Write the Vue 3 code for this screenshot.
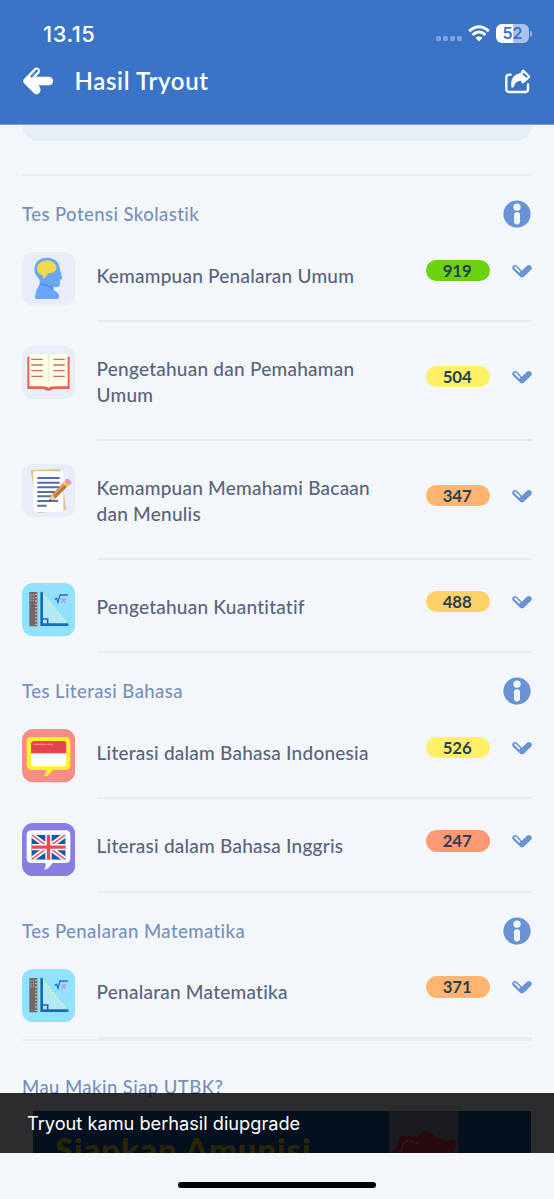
<script setup>
const sections = [
  {
    title: 'Tes Potensi Skolastik',
    rows: [
      { icon: 'head', lines: ['Kemampuan Penalaran Umum'], score: 919, tone: 'green' },
      { icon: 'book', lines: ['Pengetahuan dan Pemahaman', 'Umum'], score: 504, tone: 'yellow' },
      { icon: 'note', lines: ['Kemampuan Memahami Bacaan', 'dan Menulis'], score: 347, tone: 'orange' },
      { icon: 'math', lines: ['Pengetahuan Kuantitatif'], score: 488, tone: 'amber' },
    ],
  },
  {
    title: 'Tes Literasi Bahasa',
    rows: [
      { icon: 'indo', lines: ['Literasi dalam Bahasa Indonesia'], score: 526, tone: 'yellow' },
      { icon: 'uk', lines: ['Literasi dalam Bahasa Inggris'], score: 247, tone: 'red' },
    ],
  },
  {
    title: 'Tes Penalaran Matematika',
    rows: [{ icon: 'math', lines: ['Penalaran Matematika'], score: 371, tone: 'orange' }],
  },
]
</script>

<template>
  <div class="screen">
    <header class="top">
      <div class="status">
        <span class="time">13.15</span>
        <div class="signals">
          <span class="dots"><i></i><i></i><i></i><i></i></span>
          <svg class="wifi" width="22" height="17" viewBox="0 0 22 17">
            <g fill="none" stroke="#fff" stroke-width="2.9">
              <path d="M1.2 6.1Q11 -2.6 20.8 6.1" />
              <path d="M4.6 9.9Q11 4.1 17.4 9.9" />
            </g>
            <path d="M7.4 12.7Q11 9.7 14.6 12.7L11 16.4Z" fill="#fff" />
          </svg>
          <span class="battery">52</span>
          <i class="cap"></i>
        </div>
      </div>
      <div class="bar">
        <svg class="back" width="30" height="28" viewBox="0 0 90 84">
          <path d="M3 36L33 5Q40 -1 47 4Q54 10 49 18L39 29H78Q90 30 90 42Q90 54 78 55H47L51 62Q55 71 49 78Q41 86 33 79L3 49Q-2 42 3 36Z" fill="#fff" />
          <path d="M26 28L42 11" stroke="#3b74c7" stroke-width="7" stroke-linecap="round" />
          <path d="M29 27L40 15" stroke="#fff" stroke-width="1.5" />
        </svg>
        <h1>Hasil Tryout</h1>
        <svg class="share" width="26" height="25" viewBox="0 0 78 75">
          <path d="M17 17H13Q4 17 4 26V61Q4 69 12 69H61Q69 69 69 61V46" fill="none" stroke="#fff" stroke-width="7" stroke-linecap="round" />
          <path d="M19 55Q14 19 47 12Q48 7 51 3Q54 0 58 3L74 20Q78 24 74 27L57 42Q53 45 50 41L48 35Q32 34 26 53Q23 58 19 55Z" fill="#fff" />
          <path d="M56 15L65 23" stroke="#3b74c7" stroke-width="6" stroke-linecap="round" />
        </svg>
      </div>
    </header>

    <main class="content">
      <div class="card-end"></div>
      <div class="rule first"></div>
      <section v-for="s in sections" :key="s.title">
        <div class="head">
          <h2>{{ s.title }}</h2>
          <svg width="28" height="28" viewBox="0 0 28 28">
            <circle cx="14" cy="14" r="13.6" fill="#6a93d5" />
            <circle cx="14" cy="7.2" r="3.6" fill="#f3f7fa" />
            <rect x="11" y="12.2" width="6" height="12.2" rx="2.8" fill="#f3f7fa" />
          </svg>
        </div>
        <div v-for="r in s.rows" :key="r.lines[0]" class="row">
          <svg class="tile" viewBox="0 0 160 160">
            <template v-if="r.icon === 'head'">
              <rect width="160" height="160" rx="34" fill="#e7eef8" />
              <path d="M53 99V83Q37 68 37 51Q40 18 76 17Q111 19 114 53L121 79Q121 83 114 83V98Q113 106 103 105H94V114Q111 121 112 135Q112 141 105 141H43Q38 141 39 135Q43 108 53 99Z" fill="#6ca6f8" />
              <path d="M53 99Q77 101 94 114V107Q77 94 53 95Z" fill="#598fe2" />
              <path d="M46 57Q42 42 54 32Q75 18 94 31Q108 42 101 56Q95 64 80 63Q75 67 67 80Q62 80 61 69Q49 68 46 57Z" fill="#f2d84d" />
            </template>
            <template v-else-if="r.icon === 'book'">
              <rect width="160" height="160" rx="34" fill="#e7eef8" />
              <path d="M16 32H143V129H94Q80 139 65 129H16Z" fill="#e36454" />
              <path d="M22 24H66Q80 24 80 30Q83 24 96 24H137V121H98Q82 121 80 126Q76 121 62 121H22Z" fill="#fffde4" />
              <path d="M80 31V124" stroke="#d8dfca" stroke-width="3" stroke-dasharray="3 2" />
              <path d="M29 40H61M29 57H61M29 74H61M29 91H61M96 40H127M96 57H127M96 74H127M96 91H127" stroke="#c96a68" stroke-width="4" stroke-linecap="round" />
            </template>
            <template v-else-if="r.icon === 'note'">
              <rect width="160" height="160" rx="34" fill="#e7eef8" />
              <path d="M26 18L115 15L133 137L48 148Z" fill="#dfc391" />
              <path d="M34 22H124V135Q124 144 115 144H44Q35 144 35 135Z" fill="#fff" />
              <path d="M46 42H113M46 56H113M46 70H113M46 84H101M46 97H95M46 111H108M46 125H74" stroke="#556ca7" stroke-width="6" />
              <path d="M81 112L88 93L129 52L141 63L99 105Z" fill="#b77a4d" />
              <path d="M81 112L88 93Q97 94 99 105Z" fill="#ffd4a0" />
              <path d="M89 98L130 57" stroke="#ffad3f" stroke-width="4" />
              <path d="M126 56L138 67" stroke="#ffd62f" stroke-width="7" />
              <path d="M136 51L142 56" stroke="#f68bcf" stroke-width="13" stroke-linecap="round" />
              <path d="M80 113L84 105L89 109Z" fill="#282b39" />
            </template>
            <template v-else-if="r.icon === 'math'">
              <rect width="160" height="160" rx="34" fill="#91e2ff" />
              <rect x="22" y="27" width="24" height="103" fill="#72686b" />
              <path d="M42 32V130" stroke="#c9b19b" stroke-width="6" stroke-dasharray="4 6" />
              <path d="M27 34V57M34 34V57" stroke="#d8d5cd" stroke-width="2" stroke-dasharray="5 3" />
              <path d="M60 34V124H136Z" fill="#b3e8f6" />
              <path d="M63 35L134 121" stroke="#d9f4bc" stroke-width="5" stroke-dasharray="7 4" />
              <path d="M59 30V125H136" fill="none" stroke="#196bb0" stroke-width="8" stroke-linecap="round" />
              <path d="M61 108H77V123" fill="none" stroke="#196bb0" stroke-width="5" />
              <path d="M98 49L104 46L108 58L114 36H138" fill="none" stroke="#2475b7" stroke-width="4" />
              <path d="M119 46L131 59M132 46L118 59" stroke="#d982e6" stroke-width="4" />
            </template>
            <template v-else-if="r.icon === 'indo'">
              <rect width="160" height="160" rx="34" fill="#f48e85" />
              <path d="M29 24H131Q145 24 145 39V109Q145 123 131 123H93L77 142H66L73 123H29Q14 123 14 109V39Q14 24 29 24Z" fill="#fff02b" />
              <rect x="27" y="36" width="106" height="76" rx="9" fill="#fff" />
              <path d="M36 36H124Q133 36 133 45V73H27V45Q27 36 36 36Z" fill="#e6434f" />
              <path d="M36 46H73M79 46H91" stroke="#ff8c89" stroke-width="4" stroke-linecap="round" />
            </template>
            <template v-else>
              <rect width="160" height="160" rx="34" fill="#877ee3" />
              <path d="M29 22H131Q145 22 145 36V105Q145 120 131 120H91Q82 137 66 141Q73 131 71 120H29Q14 120 14 105V36Q14 22 29 22Z" fill="#fff" />
              <svg x="28" y="35" width="103" height="75" viewBox="0 0 103 75">
                <rect width="103" height="75" rx="5" fill="#1557ad" />
                <path d="M0 0L103 75M103 0L0 75" stroke="#fff" stroke-width="15" />
                <path d="M0 0L103 75M103 0L0 75" stroke="#e84b57" stroke-width="4" />
                <path d="M51.5 0V75M0 37.5H103" stroke="#fff" stroke-width="19" />
                <path d="M51.5 0V75M0 37.5H103" stroke="#e84b57" stroke-width="10" />
              </svg>
            </template>
          </svg>
          <div class="body">
            <p class="label"><template v-for="(l, i) in r.lines" :key="l"><br v-if="i" />{{ l }}</template></p>
            <span class="score" :class="r.tone">{{ r.score }}</span>
            <svg class="chev" width="20" height="14" viewBox="0 0 63 42">
              <path d="M3 5Q8 -1 15 4L31 20L48 4Q54 -1 60 5Q65 11 60 17L38 38Q31 44 25 38L3 17Q-2 11 3 5Z" fill="#6a93d5" />
              <path d="M10 10L23 23" stroke="#f3f7fa" stroke-width="6" stroke-linecap="round" />
              <path d="M11 13L20 22" stroke="#a6c0e8" stroke-width="1.5" />
            </svg>
          </div>
        </div>
      </section>
      <div class="rule"></div>
      <h2 class="promo-title">Mau Makin Siap UTBK?</h2>
      <div class="promo">
        <strong>Siapkan Amunisi</strong>
        <svg class="art" width="69" height="43" viewBox="0 0 207 129">
          <rect width="207" height="129" fill="#7e95a5" />
          <path d="M0 129L22 110L34 78L44 74L86 77L95 65L113 59L130 66L140 80L172 87L194 86L202 96L194 129Z" fill="#d0283c" />
          <path d="M36 123L43 98L58 86M61 90L86 97" fill="none" stroke="#e6a4ae" stroke-width="4" />
        </svg>
      </div>
      <div class="toast">Tryout kamu berhasil diupgrade</div>
    </main>
    <footer><i></i></footer>
  </div>
</template>

<style>
body { background: #f3f7fa; }
</style>

<style scoped>
.screen {
  width: 554px; height: 1199px; overflow: hidden; display: flex; flex-direction: column;
  background: #f3f7fa; font-family: Lato, "Noto Sans", sans-serif;
}
h1, h2, p { margin: 0; }
svg { display: block; flex: none; }
.top { height: 125px; flex: none; background: #3b74c7; color: #fff; border-bottom: 1px solid #79a0da; box-sizing: border-box; }
.status { display: flex; justify-content: space-between; align-items: center; height: 54px; padding: 13px 22px 0 43px; box-sizing: border-box; }
.time { font: 500 21.8px/24px Inter, sans-serif; letter-spacing: 0.6px; }
.signals { display: flex; align-items: center; }
.dots { display: flex; gap: 2px; padding-top: 9px; margin-right: 6px; }
.dots i { width: 5px; height: 5px; border-radius: 1.5px; background: #7ca2de; }
.wifi { margin-right: 6px; }
.battery {
  width: 33px; height: 19px; border-radius: 6px; font: 600 16px/19px Inter, sans-serif; text-align: center; color: #3b74c7;
  background: linear-gradient(90deg, #fff 52%, #a9c2ea 52%);
}
.cap { width: 2px; height: 6px; margin-left: 1px; border-radius: 0 2px 2px 0; background: #91b0e0; }
.bar { display: flex; align-items: center; height: 54px; padding: 0 23px; }
.back { margin-left: -0.5px; }
h1 { flex: 1; margin-left: 22px; font-size: 24px; line-height: 30px; font-weight: 600; letter-spacing: 0.65px; }
.content { position: relative; height: 1028px; flex: none; overflow: hidden; padding: 0 22px; box-sizing: border-box; }
.card-end { height: 16px; border-radius: 0 0 22px 22px; background: #e7eef8; }
.rule { height: 2.2px; background: #e9eef6; }
.first { margin-top: 33.2px; }
.head { display: flex; justify-content: space-between; align-items: center; height: 52.6px; padding: 23.4px 1.5px 0 0; box-sizing: border-box; }
h2 { color: #7690b9; font-size: 18.5px; line-height: 26px; font-weight: 500; letter-spacing: 0.43px; }
.row { display: flex; }
.tile { width: 53.3px; height: 53.3px; margin-top: 23.3px; margin-left: -0.3px; }
.body {
  flex: 1; margin-left: 21.5px; box-sizing: border-box; min-height: 93.4px; padding: 32.8px 0;
  border-bottom: 2px solid #e7ebf7; display: flex; align-items: center;
}
.label { flex: 1; margin: 1px 0 -1px; color: #59647e; font-size: 19px; line-height: 25.6px; font-weight: 500; letter-spacing: 0.24px; white-space: nowrap; }
.score {
  width: 64.5px; height: 21.4px; margin: -4px 0 4px; border-radius: 11px; text-align: center;
  font-size: 16.8px; line-height: 21.4px; font-weight: 700; color: #263f58; text-indent: -1px;
}
.green { background: #6bd20f; }
.yellow { background: #fff065; }
.orange { background: #ffb56e; }
.amber { background: #ffd268; }
.red { background: #ff9873; }
.chev { margin: -4px 0 4px 22px; }
.promo-title { margin-top: 33.5px; }
.promo { margin: 10.5px 1px 0 11px; height: 60px; background: #00509a; position: relative; display: flex; padding-left: 22px; }
.promo strong { margin-top: 20px; color: #f5cf00; font-size: 33px; line-height: 36px; font-weight: 900; letter-spacing: 0.9px; white-space: nowrap; }
.art { position: absolute; left: 356px; top: 0; }
.toast {
  position: absolute; left: 0; right: 0; top: 968px; height: 60px; box-sizing: border-box; padding-left: 27px;
  background: rgba(6, 3, 6, 0.84); color: #fff; font: 400 18.2px/61px Inter, sans-serif;
}
footer { flex: 1; display: flex; justify-content: center; align-items: flex-start; padding-top: 28.5px; }
footer i { width: 198px; height: 6.5px; border-radius: 4px; background: #000; }
</style>
